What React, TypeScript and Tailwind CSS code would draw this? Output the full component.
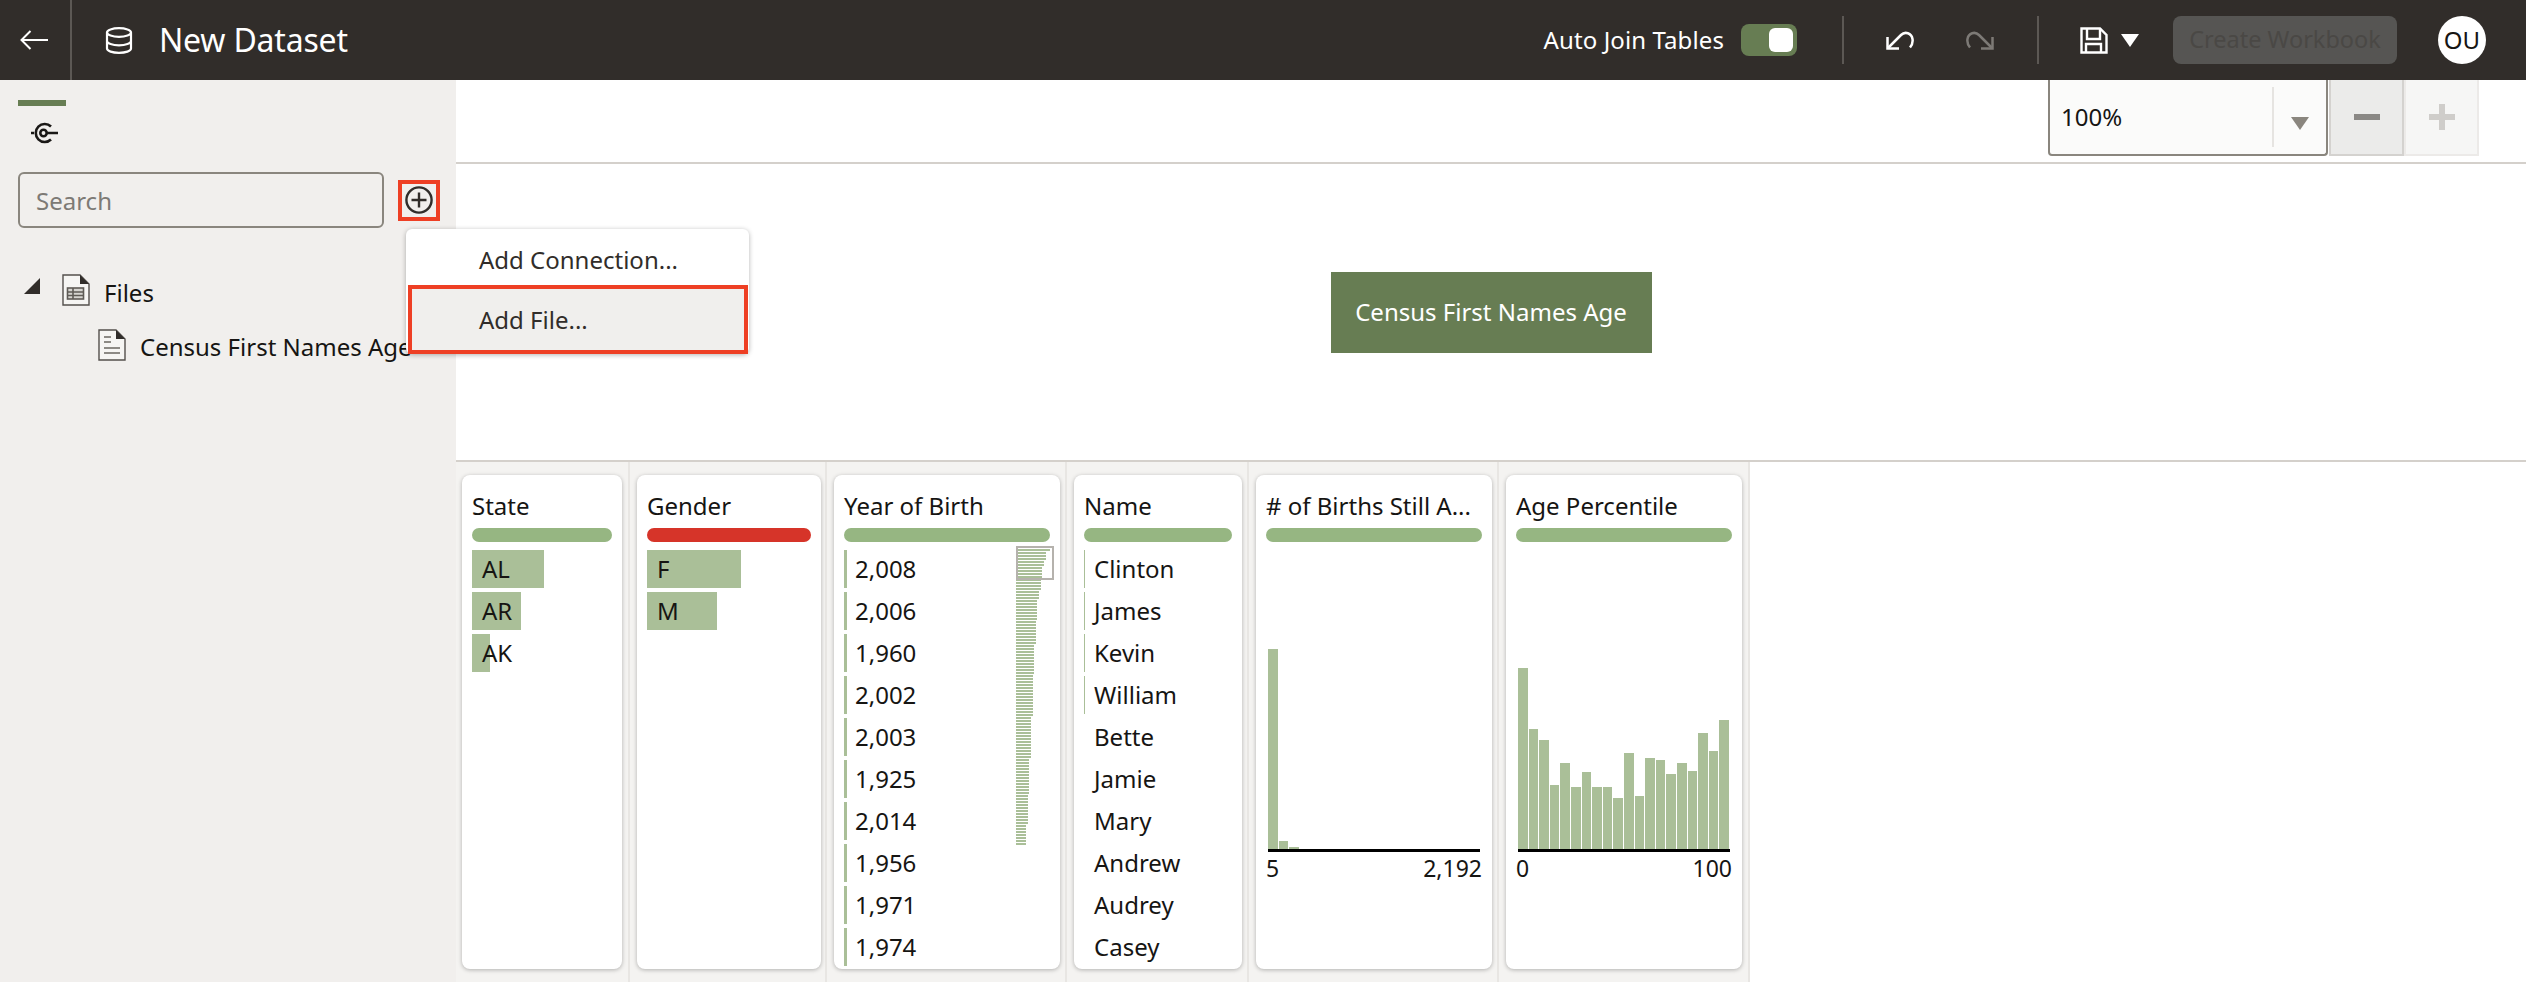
import React from "react"

const FONT = "font-['Noto_Sans',sans-serif]"

const yearBars: [number, number][] = [
  [34, 1], [30, 3], [28, 2], [26, 4], [25, 4], [23, 3], [21, 7],
  [20, 8], [18, 10], [17, 14], [15, 14], [13, 12], [12, 10], [10, 7],
]
const miniBars = yearBars.flatMap(([w, n]) => Array.from({ length: n }, () => w))

const ageTops = [625, 808, 841, 975, 910, 981, 937, 981, 981, 1013, 879, 1008, 895, 900, 943, 910, 932, 819, 873, 781]
const ageHeights = ageTops.map((t) => Math.round((1167 - t) / 3))

const Card = ({
  title,
  width,
  colWidth,
  first,
  red,
  children,
}: {
  title: string
  width: string
  colWidth: string
  first?: boolean
  red?: boolean
  children?: React.ReactNode
}) => (
  <div className={`${colWidth} ${first ? "pl-[6px]" : "pl-[7px]"} h-full shrink-0 border-r-2 border-[#e8e6e3] pt-[13px]`}>
    <div className={`${width} relative h-[494px] overflow-hidden rounded-lg bg-white px-[10px] shadow-[0_1px_4px_rgba(0,0,0,0.28)]`}>
      <div className="mt-[14px] h-[33px] text-[24px] leading-[33px] whitespace-nowrap text-[#161513]">{title}</div>
      <div className={`mt-[6px] h-[14px] rounded-full ${red ? "bg-[#d63429]" : "bg-[#96b682]"}`}></div>
      {children}
    </div>
  </div>
)

const Row = ({ label, barW, pad }: { label: string; barW: string; pad: string }) => (
  <div className="relative mb-[4px] flex h-[38px] items-center">
    <div className={`${barW} absolute top-0 left-0 h-full bg-[#aabf98]`}></div>
    <span className={`${pad} relative text-[24px] text-[#161513]`}>{label}</span>
  </div>
)

const Histogram = ({ heights, low, high }: { heights: number[]; low: string; high: string }) => (
  <div className="mt-[7px]">
    <div className="mx-[2px] flex h-[303px] items-end gap-[1px] border-b-[3px] border-black">
      {heights.map((h, i) => (
        <div key={i} className="w-[9.6px] bg-[#aabf98]" style={{ height: h }}></div>
      ))}
    </div>
    <div className="flex justify-between text-[23px] leading-[32px] text-[#161513]">
      <span>{low}</span>
      <span>{high}</span>
    </div>
  </div>
)

const DocIcon = ({ table, className }: { table?: boolean; className: string }) => (
  <svg viewBox="0 0 28 32" className={className} fill="none">
    <path d="M1 1H18L27 10V31H1Z" fill="#f6f5f3" stroke="#54504c" strokeWidth="1.4" />
    <path d="M18 1L27 10H18Z" fill="#312d2a" />
    {table ? (
      <g stroke="#5f5b56" strokeWidth="1.6">
        <rect x="5.5" y="14" width="16" height="11" fill="#d6d4d0" />
        <path d="M5.5 18H21.5M5.5 21.5H21.5M11 14V25" />
      </g>
    ) : (
      <g stroke="#6b6762" strokeWidth="1.6">
        <path d="M6 8H13M6 13H13M6 19H22M6 24H22" />
      </g>
    )}
  </svg>
)

export default function App() {
  return (
    <div className={`${FONT} flex h-[982px] w-full flex-col overflow-hidden bg-white`}>
      <header className="flex h-20 shrink-0 items-center bg-[#312d2a] text-white">
        <div className="flex h-full w-[72px] shrink-0 items-center justify-center border-r-2 border-[#5c5854]">
          <svg viewBox="0 0 28 20" className="mr-[2px] h-5 w-7" fill="none" stroke="#fff" strokeWidth="2">
            <path d="M28 10H2M10.5 1L1.5 10L10.5 19" />
          </svg>
        </div>
        <svg viewBox="0 0 28 27" className="ml-[33px] h-[27px] w-7" fill="none" stroke="#fff" strokeWidth="2.2">
          <ellipse cx="14" cy="5.5" rx="12" ry="4.3" />
          <path d="M2 5.5V21.5C2 24 7.4 25.8 14 25.8S26 24 26 21.5V5.5M2 14C2 16.4 7.4 18.3 14 18.3S26 16.4 26 14" />
        </svg>
        <div className="ml-[26px] text-[32px] leading-none tracking-[-0.2px]">New Dataset</div>

        <div className="ml-auto flex items-center">
          <span className="text-[24px] tracking-[0.1px]">Auto Join Tables</span>
          <div className="ml-[17px] flex h-8 w-14 items-center justify-end rounded-lg bg-[#677d53] pr-1">
            <div className="h-6 w-6 rounded-md bg-white"></div>
          </div>
          <div className="ml-[45px] h-12 w-[2px] bg-[#5c5854]"></div>
          <svg viewBox="0 0 28 20" className="ml-[42px] h-5 w-7" fill="none" stroke="#fff" strokeWidth="2.5">
            <path d="M2 18L15 5C19 1 25.5 3 26.5 9C27 12 26 15 24 17.5" />
            <path d="M1.5 7V18.5H13" />
          </svg>
          <svg viewBox="0 0 28 20" className="ml-[52px] h-5 w-7" fill="none" stroke="#7d7a76" strokeWidth="2.5">
            <path d="M26 18L13 5C9 1 2.5 3 1.5 9C1 12 2 15 4 17.5" />
            <path d="M26.5 7V18.5H15" />
          </svg>
          <div className="ml-[43px] h-12 w-[2px] bg-[#5c5854]"></div>
          <svg viewBox="0 0 28 27" className="ml-[41px] h-[27px] w-7" fill="none" stroke="#fff" strokeWidth="2.4">
            <path d="M1.5 1.5H20L26.5 8V25.5H1.5Z" />
            <path d="M7 1.5V12H20V1.5M6 25.5V17H21V25.5" />
          </svg>
          <div className="ml-[13px] h-0 w-0 border-x-[9.5px] border-t-[13px] border-x-transparent border-t-white"></div>
          <button className="ml-[34px] flex h-12 w-[224px] items-center justify-center rounded-lg bg-[#565553] text-[23.5px] text-[#4a4845]">
            Create Workbook
          </button>
          <div className="mr-10 ml-[41px] flex h-12 w-12 items-center justify-center rounded-full bg-white text-[24px] text-[#161513]">
            OU
          </div>
        </div>
      </header>

      <div className="flex min-h-0 flex-1">
        <aside className="relative w-[456px] shrink-0 bg-[#f1efed] pt-5">
          <div className="ml-[18px] h-[6px] w-12 bg-[#677d53]"></div>
          <svg viewBox="0 0 28 22" className="mt-4 ml-[31px] h-[22px] w-7" fill="none" stroke="#1a1816" strokeWidth="2.6">
            <path d="M20 4.5A9 9 0 1 0 20 17.5" />
            <circle cx="12.5" cy="11" r="3.2" />
            <path d="M16 11H27M0 11H3" />
          </svg>
          <div className="mt-[28px] flex items-center pl-[18px]">
            <div className="flex h-14 w-[366px] items-center rounded-md border-2 border-[#8a867e] pt-[2px] pl-4 text-[24px] text-[#7d7a75]">
              Search
            </div>
            <div className="ml-[14px] flex h-[41px] w-[42px] items-center justify-center border-4 border-[#ee3f24]">
              <svg viewBox="0 0 28 28" className="h-7 w-7" fill="none" stroke="#312d2a" strokeWidth="2.4">
                <circle cx="14" cy="14" r="12.6" />
                <path d="M14 6.5V21.5M6.5 14H21.5" />
              </svg>
            </div>
          </div>
          <div className="mt-[46px] flex h-8 items-center pl-6">
            <div className="mb-2 h-0 w-0 border-b-[16px] border-l-[16px] border-b-[#312d2a] border-l-transparent"></div>
            <DocIcon table className="ml-[22px] h-8 w-7" />
            <span className="mt-[6px] ml-[14px] text-[24px] text-[#161513]">Files</span>
          </div>
          <div className="mt-[23px] flex h-8 items-center pl-[98px]">
            <DocIcon className="h-8 w-7" />
            <span className="mt-[4px] ml-[14px] text-[24px] whitespace-nowrap text-[#161513]">Census First Names Age</span>
          </div>

          <div className="absolute top-[149px] left-[406px] z-10 h-[125px] w-[343px] rounded-md bg-white pt-[2px] pl-[2px] text-[24px] text-[#312d2a] shadow-[0_1px_5px_rgba(0,0,0,0.3)]">
            <div className="flex h-[54px] items-center pt-[4px] pl-[71px]">Add Connection...</div>
            <div className="flex h-[69px] w-[340px] items-center border-4 border-[#ee3f24] bg-[#f0efed] pl-[67px]">
              Add File...
            </div>
          </div>
        </aside>

        <main className="flex min-w-0 flex-1 flex-col">
          <div className="flex h-[84px] shrink-0 justify-end border-b-2 border-[#d4d0cb] pr-[47px]">
            <div className="flex h-[76px] w-[280px] items-center rounded-b-sm border-x-2 border-b-2 border-[#8a867e] bg-[#fbfbfa] pl-[11px] text-[24px] text-[#161513]">
              <span className="flex-1">100%</span>
              <div className="flex h-[60px] w-[54px] items-center justify-center border-l-2 border-[#e6e4e1] pt-[12px]">
                <div className="h-0 w-0 border-x-[9px] border-t-[13px] border-x-transparent border-t-[#8a867e]"></div>
              </div>
            </div>
            <div className="ml-[1px] flex h-[76px] w-[75px] items-center justify-center border-x-2 border-b-2 border-[#d4d2cf] bg-[#ebebea]">
              <div className="h-[6px] w-[26px] bg-[#8a8885]"></div>
            </div>
            <div className="flex h-[76px] w-[75px] items-center justify-center border-x-2 border-b-2 border-[#eceae8] bg-[#f6f6f5]">
              <svg viewBox="0 0 26 26" className="h-[26px] w-[26px]" fill="#cfcdca">
                <path d="M10 0H16V10H26V16H16V26H10V16H0V10H10Z" />
              </svg>
            </div>
          </div>

          <div className="flex h-[296px] shrink-0 items-center justify-center">
            <div className="flex h-[81px] w-[321px] items-center justify-center bg-[#677d53] text-[24px] text-white">
              Census First Names Age
            </div>
          </div>

          <div className="flex min-h-0 flex-1 border-t-2 border-[#d4d0cb]">
            <div className="flex bg-[#f4f3f1]">
              <Card title="State" colWidth="w-[174px]" width="w-[160px]" first>
                <div className="mt-[8px]">
                  <Row label="AL" barW="w-[72px]" pad="pl-[10px]" />
                  <Row label="AR" barW="w-[49px]" pad="pl-[10px]" />
                  <Row label="AK" barW="w-[18px]" pad="pl-[10px]" />
                </div>
              </Card>
              <Card title="Gender" colWidth="w-[197px]" width="w-[184px]" red>
                <div className="mt-[8px]">
                  <Row label="F" barW="w-[94px]" pad="pl-[10px]" />
                  <Row label="M" barW="w-[70px]" pad="pl-[10px]" />
                </div>
              </Card>
              <Card title="Year of Birth" colWidth="w-[240px]" width="w-[226px]">
                <div className="mt-[8px]">
                  {["2,008", "2,006", "1,960", "2,002", "2,003", "1,925", "2,014", "1,956", "1,971", "1,974"].map((y) => (
                    <Row key={y} label={y} barW="w-[3px]" pad="pl-[11px]" />
                  ))}
                </div>
                <div className="absolute top-[74px] right-[6px] flex w-[38px] flex-col gap-[1px]">
                  {miniBars.map((w, i) => (
                    <div key={i} className="h-[2px] bg-[#aabf98]" style={{ width: w }}></div>
                  ))}
                </div>
                <div className="absolute top-[71px] right-[6px] h-[34px] w-[38px] border-2 border-[#b5b2ad]"></div>
              </Card>
              <Card title="Name" colWidth="w-[182px]" width="w-[168px]">
                <div className="mt-[8px]">
                  {["Clinton", "James", "Kevin", "William", "Bette", "Jamie", "Mary", "Andrew", "Audrey", "Casey"].map((n, i) => (
                    <Row key={n} label={n} barW={i < 4 ? "w-[1px]" : "w-0"} pad="pl-[10px]" />
                  ))}
                </div>
              </Card>
              <Card title="# of Births Still A..." colWidth="w-[250px]" width="w-[236px]">
                <Histogram heights={[200, 8, 2]} low="5" high="2,192" />
              </Card>
              <Card title="Age Percentile" colWidth="w-[251px]" width="w-[236px]">
                <Histogram heights={ageHeights} low="0" high="100" />
              </Card>
            </div>
          </div>
        </main>
      </div>
    </div>
  )
}
